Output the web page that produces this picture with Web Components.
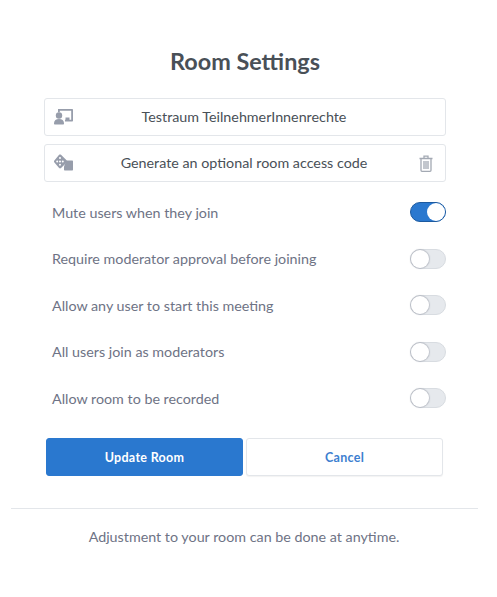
<!DOCTYPE html>
<html>
<head>
<meta charset="utf-8">
<title>Room Settings</title>
<style>
  html, body { margin: 0; background: #fff; }
  body { font-family: "Lato", "Noto Sans", sans-serif; }
</style>
</head>
<body>
<template id="tpl-field">
  <style>
    :host { display: flex; align-items: center; height: 38px; box-sizing: border-box; border: 1px solid #e3e6ea; border-radius: 3px; padding: 0 12px 0 9px; color: #495057; font-size: 14.3px; }
    .icon { width: 21px; height: 18px; flex: none; }
    .text { flex: 1; text-align: center; padding: 0 0 2px 1px; }
    .end { width: 21px; flex: none; display: flex; justify-content: flex-end; }
    ::slotted(svg) { display: block; }
  </style>
  <div class="icon"><slot name="icon"></slot></div>
  <div class="text"><slot></slot></div>
  <div class="end"><slot name="end"></slot></div>
</template>

<template id="tpl-toggle">
  <style>
    :host { display: flex; align-items: center; justify-content: space-between; height: 20px; padding-left: 8px; color: #6e7385; font-size: 14.3px; }
    .track { width: 36px; height: 20px; box-sizing: border-box; border-radius: 10px; background: #e6e9ed; border: 1px solid #d8dce1; position: relative; flex: none; }
    .knob { position: absolute; left: 0; top: 0; width: 18px; height: 18px; border-radius: 50%; background: #fff; box-shadow: 0 0 1px 1px rgba(120,125,140,.35); }
    :host([on]) .track { background: #2a78cf; border-color: #1c5aa0; }
    :host([on]) .knob { left: 16px; box-shadow: none; }
  </style>
  <span><slot></slot></span>
  <div class="track"><div class="knob"></div></div>
</template>

<template id="tpl-button">
  <style>
    :host { display: flex; align-items: center; justify-content: center; height: 38px; box-sizing: border-box; border-radius: 3px; font-size: 12.5px; font-weight: 700; letter-spacing: .3px; flex: 1; background: #fff; color: #3d7fd0; border: 1px solid #e3e6ea; box-shadow: 0 1px 1px rgba(0,0,0,.05); }
    :host([primary]) { background: #2a78cf; color: #fff; border-color: #2a78cf; box-shadow: none; }
  </style>
  <slot></slot>
</template>

<template id="tpl-modal">
  <style>
    :host { display: block; width: 497px; height: 597px; box-sizing: border-box; padding-top: 45px; }
    h2 { margin: 0 0 21px; height: 32px; line-height: 32px; text-align: center; font-size: 23.4px; font-weight: 700; color: #495057; padding-right: 7px; }
    .fields { display: grid; gap: 8px; margin: 0 51px 0 44px; }
    .toggles { display: grid; row-gap: 26.5px; margin: 20px 51px 0 44px; }
    .buttons { display: flex; gap: 3px; margin: 30px 54px 0 46px; }
    hr { border: 0; border-top: 1px solid #e3e6ea; margin: 32px 19px 0 11px; }
    footer { text-align: center; margin-top: 18px; color: #6e7385; font-size: 14.3px; line-height: 20px; padding-right: 9px; }
  </style>
  <h2><slot name="title"></slot></h2>
  <div class="fields"><slot name="fields"></slot></div>
  <div class="toggles"><slot name="toggles"></slot></div>
  <div class="buttons"><slot name="buttons"></slot></div>
  <hr>
  <footer><slot name="footer"></slot></footer>
</template>

<room-modal>
  <span slot="title">Room Settings</span>

  <room-field slot="fields">
    <svg slot="icon" width="21" height="18" viewBox="0 0 21 18" fill="#979dab">
      <circle cx="5" cy="7.500" r="3.200"/>
      <path d="M0 15.500c0-2.900 2-4.400 5-4.400s5 1.500 5 4.400c0 .7-.4 1-1 1H1c-.6 0-1-.3-1-1z"/>
      <path d="M4 1h14c.6 0 1 .4 1 1v10.500c0 .6-.4 1-1 1h-7v-1.800h6.200V2.800H5.800v1.400H4V2c0-.6 0-1 0-1z"/>
      <path d="M11.500 9.500h4v2.500h-4z"/>
    </svg>
    Testraum TeilnehmerInnenrechte
  </room-field>

  <room-field slot="fields">
    <svg slot="icon" width="21" height="18" viewBox="0 0 21 18" fill="#979dab">
      <path d="M12.500 6.500h5.500c.7 0 1 .4 1 1v8c0 .7-.3 1-1 1h-7c-.7 0-1-.3-1-1v-3z"/>
      <path fill-rule="evenodd" d="M7 .8l5.800 5.600c.6.600.6 1.400 0 2L7 14c-.6.500-1.300.500-1.900 0L.4 8.400c-.6-.6-.6-1.400 0-2L5.100.8c.6-.5 1.300-.5 1.900 0zM6 3a1 1 0 1 0 0 2 1 1 0 0 0 0-2zM3.200 6.400a1 1 0 1 0 0 2 1 1 0 0 0 0-2zm2.800 0a1 1 0 1 0 0 2 1 1 0 0 0 0-2zm2.800 0a1 1 0 1 0 0 2 1 1 0 0 0 0-2zM6 9.800a1 1 0 1 0 0 2 1 1 0 0 0 0-2z"/>
    </svg>
    Generate an optional room access code
    <svg slot="end" width="14" height="17" viewBox="0 0 14 17" fill="none" stroke="#a3a9b3" stroke-width="1.300">
      <path d="M.5 3.500h13M5 3.200V1.200h4v2M2 3.500v11.800c0 .6.400 1 1 1h8c.6 0 1-.4 1-1V3.500"/>
      <path d="M5 6v8M7 6v8M9 6v8"/>
    </svg>
  </room-field>

  <room-toggle slot="toggles" on>Mute users when they join</room-toggle>
  <room-toggle slot="toggles">Require moderator approval before joining</room-toggle>
  <room-toggle slot="toggles">Allow any user to start this meeting</room-toggle>
  <room-toggle slot="toggles">All users join as moderators</room-toggle>
  <room-toggle slot="toggles">Allow room to be recorded</room-toggle>

  <room-button slot="buttons" primary>Update Room</room-button>
  <room-button slot="buttons">Cancel</room-button>

  <span slot="footer">Adjustment to your room can be done at anytime.</span>
</room-modal>

<script>
  function define(name, templateId) {
    customElements.define(name, class extends HTMLElement {
      constructor() {
        super();
        var tpl = document.getElementById(templateId);
        this.attachShadow({ mode: 'open' }).appendChild(tpl.content.cloneNode(true));
      }
    });
  }
  define('room-field', 'tpl-field');
  define('room-toggle', 'tpl-toggle');
  define('room-button', 'tpl-button');
  define('room-modal', 'tpl-modal');
</script>
</body>
</html>
